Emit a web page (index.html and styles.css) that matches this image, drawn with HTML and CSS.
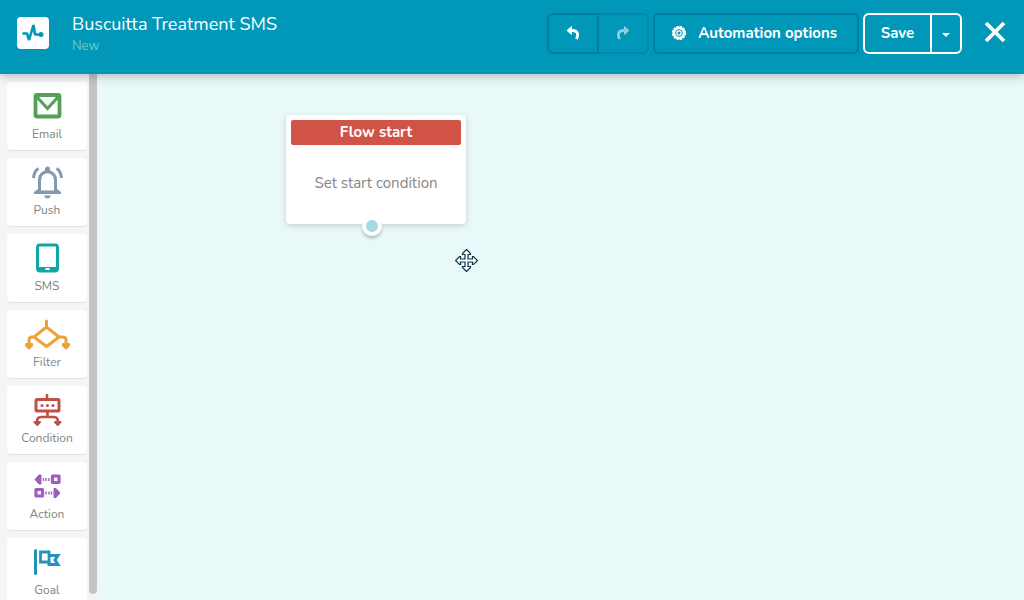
FILE: index.html
```html
<!DOCTYPE html>
<html lang="en">
<head>
    <meta charset="UTF-8">
    <meta name="viewport" content="width=device-width, initial-scale=1.0">
    <title>Buscuitta Treatment SMS</title>
    <link rel="stylesheet" href="styles.css">
</head>
<body>
    <header class="topbar">
        <div class="logo">
            <svg width="22" height="20" viewBox="0 0 22 20">
                <path d="M0.500 10.500h4.500l2 6.500 4.500-15 1.500 9.500h6" fill="none" stroke="#0097b8" stroke-width="2.600" stroke-linejoin="bevel"/>
                <circle cx="19" cy="11.500" r="2.500" fill="#0097b8"/>
            </svg>
        </div>
        <div class="heading">
            <h1>Buscuitta Treatment SMS</h1>
            <p>New</p>
        </div>
        <div class="actions">
            <div class="group">
                <button class="btn btn-icon" aria-label="Undo">
                    <svg width="14" height="16" viewBox="0 0 14 16">
                        <path d="M3 5.500h3.500c5 0 6.500 4 3.800 8.500" fill="none" stroke="#fff" stroke-width="2.800"/>
                        <path d="M1 5.500l4.500-4v8z" fill="#fff" stroke="#fff" stroke-linejoin="round"/>
                    </svg>
                </button>
                <button class="btn btn-icon btn-disabled" aria-label="Redo" disabled>
                    <svg width="14" height="16" viewBox="0 0 14 16">
                        <path d="M11 5.500H7.500c-5 0-6.500 4-3.800 8.500" fill="none" stroke="#8ccfdf" stroke-width="2.800"/>
                        <path d="M13 5.500l-4.500-4v8z" fill="#8ccfdf" stroke="#8ccfdf" stroke-linejoin="round"/>
                    </svg>
                </button>
            </div>
            <button class="btn btn-options">
                <svg width="16" height="16" viewBox="0 0 16 16">
                    <circle cx="8" cy="8" r="6.400" fill="#fff"/>
                    <circle cx="8" cy="8" r="6.400" fill="none" stroke="#fff" stroke-width="1.600" stroke-dasharray="2.200 1.150"/>
                    <circle cx="8" cy="8" r="3.400" fill="none" stroke="#0097b8"/>
                    <circle cx="8" cy="8" r="1.500" fill="#0097b8"/>
                </svg>
                Automation options
            </button>
            <div class="group group-save">
                <button class="btn btn-save">Save</button>
                <button class="btn btn-more" aria-label="More save options">
                    <svg width="8" height="4" viewBox="0 0 8 4"><path d="M0 0h8L4 4z" fill="#fff"/></svg>
                </button>
            </div>
            <button class="close" aria-label="Close">
                <svg width="22" height="22" viewBox="0 0 22 22">
                    <path d="M2 2l18 18M20 2L2 20" stroke="#fff" stroke-width="3.800"/>
                </svg>
            </button>
        </div>
    </header>

    <main class="editor">
        <aside class="sidebar">
            <div class="blocks">
                <button class="block">
                    <svg width="48" height="36" viewBox="0 0 48 36">
                        <rect x="12.500" y="7" width="24" height="21.500" rx="1.500" fill="none" stroke="#56a056" stroke-width="3.800"/>
                        <path d="M13 8l11.500 12.500L36 8" fill="none" stroke="#56a056" stroke-width="3.200"/>
                    </svg>
                    Email
                </button>
                <button class="block">
                    <svg width="48" height="36" viewBox="0 0 48 36">
                        <path d="M16.500 27V16c0-11 16-11 16 0v11" fill="none" stroke="#8199b1" stroke-width="3"/>
                        <path d="M15 23v2l-4 3v2h27v-2l-4-3v-2l-1.500 3.500h-16zM22 5a2.500 2.500 0 0 1 5 0v2h-5zM21 31.500h7c-1 4-6 4-7 0z" fill="#8199b1"/>
                        <path d="M15.500 4.500q-4.500 2.500-5 9.500M33.500 4.500q4.500 2.500 5 9.500" fill="none" stroke="#8199b1" stroke-width="3"/>
                    </svg>
                    Push
                </button>
                <button class="block">
                    <svg width="48" height="36" viewBox="0 0 48 36">
                        <rect x="14.500" y="5" width="20" height="26" rx="2.500" fill="none" stroke="#12a5a5" stroke-width="3"/>
                        <path d="M15 27h20v4H15z" fill="#12a5a5"/>
                        <rect x="22.500" y="28" width="4" height="2" fill="#fff"/>
                    </svg>
                    SMS
                </button>
                <button class="block">
                    <svg width="48" height="36" viewBox="0 0 48 36">
                        <path d="M23.500 5v6M23.500 11L36 21l-12.500 9.500L11 21zM12 21H9q-3 0-3 3v5M35 21h5q3 0 3 3v5" fill="none" stroke="#eea236" stroke-width="3" stroke-linecap="round" stroke-linejoin="round"/>
                        <path d="M3 28h6v1.500l-3 3-3-3zM40 28h6v1.500l-3 3-3-3z" fill="#eea236" stroke="#eea236" stroke-width="2" stroke-linejoin="round"/>
                    </svg>
                    Filter
                </button>
                <button class="block">
                    <svg width="48" height="36" viewBox="0 0 48 36">
                        <path d="M24 3v4M24.500 19v6M14 30q0-5 4-5h13q4 0 4 5" fill="none" stroke="#c14f45" stroke-width="2.600" stroke-linecap="round"/>
                        <rect x="13" y="7.500" width="23" height="11.500" rx="1" fill="none" stroke="#c14f45" stroke-width="3"/>
                        <path d="M11.500 30h5.500l-2.700 3zM32 30h5.500l-2.700 3z" fill="#c14f45" stroke="#c14f45" stroke-width="2" stroke-linejoin="round"/>
                        <circle cx="19" cy="13.500" r="1.500" fill="#c14f45"/>
                        <circle cx="24.500" cy="13.500" r="1.500" fill="#c14f45"/>
                        <circle cx="30" cy="13.500" r="1.500" fill="#c14f45"/>
                    </svg>
                    Condition
                </button>
                <button class="block">
                    <svg width="48" height="36" viewBox="0 0 48 36">
                        <path d="M12 11.500l4-4.500h2v9h-2zM37 25l-4-4.500h-2v9h2z" fill="#9b5fc0" stroke="#9b5fc0" stroke-linejoin="round"/>
                        <path d="M20.500 10v3M23 10v3M26 10v3M23 23.500v3M26 23.500v3M28.500 23.500v3" stroke="#9b5fc0" stroke-width="1.400"/>
                        <rect x="29.500" y="8" width="6.500" height="6.500" fill="none" stroke="#9b5fc0" stroke-width="3.200" stroke-linejoin="round"/>
                        <rect x="13" y="21.500" width="6.500" height="6.500" fill="none" stroke="#9b5fc0" stroke-width="3.200" stroke-linejoin="round"/>
                    </svg>
                    Action
                </button>
                <button class="block">
                    <svg width="48" height="36" viewBox="0 0 48 36">
                        <path d="M12.500 6.500v23" stroke="#2592be" stroke-width="3" stroke-linecap="round"/>
                        <path d="M17.500 8h8.500v10h-8.500z" fill="none" stroke="#2592be" stroke-width="2.800"/>
                        <path d="M27 11.500h8l-3 4.500 3 4.500h-9v-3" fill="none" stroke="#2592be" stroke-width="3"/>
                    </svg>
                    Goal
                </button>
            </div>
            <div class="scrollbar"></div>
        </aside>

        <section class="canvas">
            <article class="node">
                <h2>Flow start</h2>
                <p>Set start condition</p>
                <span class="connector"></span>
            </article>
            <svg class="cursor" width="23" height="23" viewBox="0 0 23 23">
                <path d="M11.500 0.500l4 4v1h-2.500v4.500h4.500V7.500h1l4 4-4 4h-1V13H13v4.500h2.500v1l-4 4-4-4v-1H10V13H5.500v2.500h-1l-4-4 4-4h1V10H10V5.500H7.500v-1z" fill="#fff" stroke="#0c3547" stroke-width="1.200"/>
                <path d="M11.500 6v11M6 11.500h11" stroke="#fff"/>
            </svg>
        </section>
    </main>
</body>
</html>
```
FILE: styles.css
```css
* {
    box-sizing: border-box;
}
body {
    margin: 0;
    height: 100vh;
    display: flex;
    flex-direction: column;
    overflow: hidden;
    font-family: Nunito, Lato, sans-serif;
    background: #e9f8f8;
}
h1, h2, p {
    margin: 0;
}
button {
    font-family: inherit;
    margin: 0;
    padding: 0;
    cursor: pointer;
}

/* top bar */
.topbar {
    position: relative;
    z-index: 1;
    flex: none;
    display: flex;
    align-items: flex-start;
    padding: 13px 18px 17px 17px;
    background: #0097b8;
    color: #fff;
    box-shadow: 0 2px 10px rgba(0, 0, 0, 0.25);
}
.logo {
    width: 32px;
    height: 32px;
    margin-top: 4px;
    display: flex;
    align-items: center;
    justify-content: center;
    background: #fff;
    border-radius: 4px;
}
.heading {
    flex: 1;
    margin-left: 23px;
}
.heading h1 {
    font-size: 18px;
    line-height: 22px;
    font-weight: 400;
}
.heading p {
    font-size: 13px;
    line-height: 22px;
    color: #72cbc3;
}
.actions {
    display: flex;
    gap: 4px;
}
.group {
    display: flex;
}
.btn {
    height: 41px;
    padding-bottom: 2px;
    display: flex;
    align-items: center;
    justify-content: center;
    border: 2px solid #007f9c;
    border-radius: 6px;
    background: none;
    color: #fff;
    font-size: 15px;
    font-weight: 700;
}
.group .btn:first-child {
    border-radius: 6px 0 0 6px;
}
.group .btn:last-child {
    border-left: 0;
    border-radius: 0 6px 6px 0;
}
.btn-icon {
    width: 52px;
}
.btn-disabled {
    width: 50px;
}
.group .btn-disabled {
    border-color: #0089a8;
}
.btn-options {
    gap: 11px;
    padding: 0 20px 2px 16px;
}
.group-save .btn {
    border-color: #fff;
}
.btn-save {
    width: 69px;
}
.btn-more {
    width: 30px;
}
.btn-more svg {
    margin-top: 4px;
}
.close {
    height: 22px;
    margin: 8px 0 0 18px;
    border: 0;
    background: none;
}

/* editor */
.editor {
    flex: 1;
    display: flex;
    min-height: 0;
}
.sidebar {
    display: flex;
    background: #f4f6f5;
}
.blocks {
    display: flex;
    flex-direction: column;
    gap: 8px;
    padding: 8px 2px 0 7px;
    overflow: hidden;
}
.block {
    flex: none;
    width: 80px;
    height: 68px;
    padding-top: 6px;
    display: flex;
    flex-direction: column;
    align-items: center;
    gap: 2px;
    border: 0;
    border-radius: 4px;
    background: #fff;
    box-shadow: 0 1px 1px rgba(0, 0, 0, 0.08);
    color: #808480;
    font-size: 12px;
    line-height: 16px;
}
.scrollbar {
    width: 8px;
    margin-bottom: 6px;
    border-radius: 0 0 4px 4px;
    background: #c3c5c4;
}
.canvas {
    position: relative;
    flex: 1;
}
.node {
    position: absolute;
    left: 189px;
    top: 41px;
    width: 180px;
    padding: 5px;
    border-radius: 4px;
    background: #fff;
    box-shadow: 0 2px 6px rgba(0, 0, 0, 0.15);
    text-align: center;
}
.node h2 {
    border-radius: 2px;
    background: #d15347;
    color: #fff;
    font-size: 15px;
    font-weight: 700;
    line-height: 25px;
}
.node p {
    padding: 28px 0 25px;
    color: #858885;
    font-size: 15px;
    line-height: 21px;
}
.connector {
    position: absolute;
    left: 76px;
    bottom: -12px;
    width: 20px;
    height: 20px;
    border: 4px solid #fff;
    border-radius: 50%;
    background: #a2d9e3;
    box-shadow: 0 3px 3px rgba(0, 0, 0, 0.2);
}
.cursor {
    position: absolute;
    left: 358px;
    top: 175px;
}
```
